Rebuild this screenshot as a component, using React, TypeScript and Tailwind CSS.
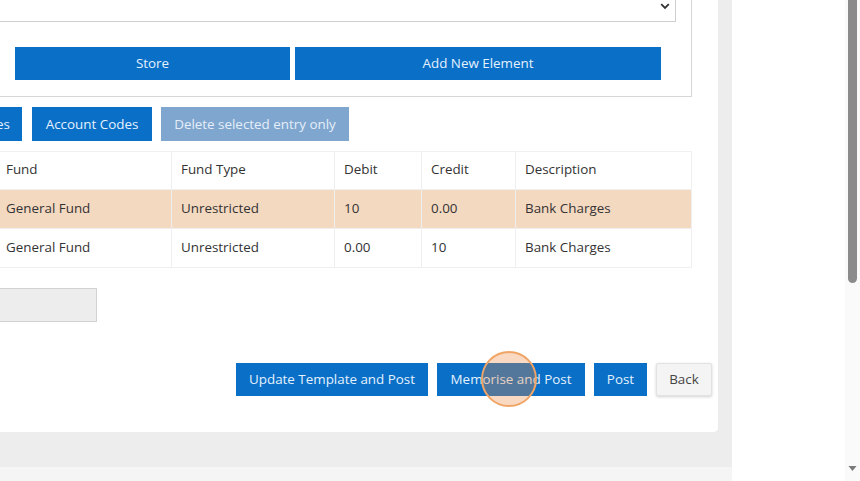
import React from "react";

const blue = "bg-[#0a6fc6] text-[#e4f1ff]";

export default function App() {
  const cols = ["w-[174px] pl-[9px]", "w-[163px] pl-[9px]", "w-[87px] pl-[9px]", "w-[94px] pl-[9px]", "w-[176px] pl-[9px]"];
  const rows = [
    { cells: ["Fund", "Fund Type", "Debit", "Credit", "Description"], bg: "bg-white", h: "h-[38px]" },
    { cells: ["General Fund", "Unrestricted", "10", "0.00", "Bank Charges"], bg: "bg-[#f4d9c1]", h: "h-[39px]" },
    { cells: ["General Fund", "Unrestricted", "0.00", "10", "Bank Charges"], bg: "bg-white", h: "h-[39px]" },
  ];
  return (
    <div
      className="relative flex w-[860px] h-[481px] overflow-hidden bg-white text-[13.4px] text-[#333]"
      style={{ fontFamily: '"Open Sans", "Noto Sans", sans-serif' }}
    >
      {/* left page region */}
      <div className="flex flex-col w-[732px] h-full bg-[#ededed]">
        <div className="flex-none w-[718px] h-[432px] bg-white rounded-br-[4px] overflow-hidden shadow-[0_1px_1px_rgba(0,0,0,0.06)]">
          {/* top box */}
          <div className="ml-[-20px] mt-[-20px] w-[712px] h-[117px] border border-[#d6d6d6] flex flex-col">
            <div className="relative h-[41px] mr-[15px] border-b border-r border-[#cfcfcf]">
              <svg className="absolute right-[5px] top-[22px]" width="10" height="7" viewBox="0 0 10 7">
                <path d="M1.2 1.2 L5 5 L8.8 1.2" fill="none" stroke="#333" strokeWidth="1.8" />
              </svg>
            </div>
            <div className="flex gap-[5px] ml-[34px] mt-[25px]">
              <div className={`${blue} w-[275px] h-[33px] flex items-center justify-center`}>Store</div>
              <div className={`${blue} w-[366px] h-[33px] flex items-center justify-center`}>Add New Element</div>
            </div>
          </div>

          {/* button row */}
          <div className="flex gap-[9px] mt-[10px]">
            <div className={`${blue} w-[22px] h-[34px] flex items-center justify-end pr-[12px] overflow-hidden whitespace-nowrap`}>es</div>
            <div className={`${blue} ml-[1px] w-[120px] h-[34px] flex items-center justify-center`}>Account Codes</div>
            <div className="bg-[#7fa6cf] text-[#e5eef8] w-[188px] h-[34px] flex items-center justify-center">
              Delete selected entry only
            </div>
          </div>

          {/* table */}
          <div className="ml-[-3px] mt-[10px] w-[695px] border-t border-r border-[#f0f0f0] flex flex-col">
            {rows.map((r, i) => (
              <div key={i} className={`flex ${r.h} ${r.bg} border-b border-[#efefef]`}>
                {r.cells.map((c, j) => (
                  <div
                    key={j}
                    className={`${cols[j]} flex items-center pb-[2px] ${j > 0 ? "border-l border-[#efefef]" : ""}`}
                  >
                    {c}
                  </div>
                ))}
              </div>
            ))}
          </div>

          {/* gray input */}
          <div className="ml-[-4px] mt-[20px] w-[101px] h-[34px] bg-[#ededed] border border-[#d2d2d2]" />

          {/* bottom buttons */}
          <div className="relative flex justify-end gap-[9px] mt-[41px] mr-[6px]">
            <div className={`${blue} w-[192px] h-[33px] flex items-center justify-center`}>Update Template and Post</div>
            <div className={`${blue} w-[148px] h-[33px] flex items-center justify-center`}>Memorise and Post</div>
            <div className={`${blue} w-[53px] h-[33px] flex items-center justify-center`}>Post</div>
            <div className="w-[56px] h-[33px] flex items-center justify-center bg-[#f4f4f4] text-[#444] border border-[#e2e2e2] rounded-[2px] shadow-[0_1px_3px_rgba(0,0,0,0.18)]">
              Back
            </div>
            <div className="absolute left-[481px] top-[-12px] w-[56px] h-[56px] rounded-full border-2 border-[#f0a566] bg-[rgba(238,138,64,0.32)]" />
          </div>
        </div>
        <div className="flex-none h-[35px] w-[732px] bg-[#ededed]" />
        <div className="flex-1 w-[732px] bg-[#f5f5f6]" />
      </div>

      {/* right white area */}
      <div className="flex-1 bg-white" />

      {/* scrollbar */}
      <div className="relative w-[15px] h-full bg-[#fafafa]">
        <div className="absolute left-[3px] top-0 w-[9px] h-[283px] bg-[#8b8b8b] rounded-b-[5px]" />
        <svg className="absolute left-[3px] top-[465px]" width="9" height="7" viewBox="0 0 9 7">
          <path d="M0.5 1 L8.5 1 L4.5 6 Z" fill="#7a7a7a" />
        </svg>
      </div>
    </div>
  );
}
